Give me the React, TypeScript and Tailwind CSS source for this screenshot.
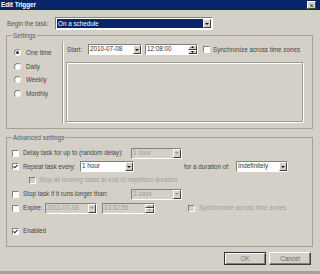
import React from "react";

const sunken = "border border-t-[#808080] border-l-[#808080] border-b-white border-r-white";
const raised = "border border-t-white border-l-white border-b-[#404040] border-r-[#404040]";

function Check({ checked, disabled }: { checked?: boolean; disabled?: boolean }) {
  return (
    <span
      className={`flex h-[7px] w-[7px] shrink-0 items-center justify-center ${sunken} ${disabled ? "bg-[#d4d0c8]" : "bg-white"}`}
    >
      {checked && (
        <svg width="5" height="5" viewBox="0 0 5 5">
          <path d="M0.4 2.3 L1.8 3.8 L4.6 0.8" stroke="#2a2a2a" strokeWidth="1.1" fill="none" />
        </svg>
      )}
    </span>
  );
}

function Radio({ checked }: { checked?: boolean }) {
  return (
    <span className="flex h-[7px] w-[7px] shrink-0 items-center justify-center rounded-full border border-t-[#808080] border-l-[#808080] border-b-[#f4f4f4] border-r-[#f4f4f4] bg-white">
      {checked && <span className="h-[3px] w-[3px] rounded-full bg-[#333]" />}
    </span>
  );
}

function Arrow({ disabled }: { disabled?: boolean }) {
  return (
    <span className={`flex h-full w-[8px] shrink-0 items-center justify-center bg-[#d4d0c8] ${raised}`}>
      <svg width="4" height="2" viewBox="0 0 4 2">
        <path d="M0 0 L4 0 L2 2 Z" fill={disabled ? "#9a978f" : "#111"} />
      </svg>
    </span>
  );
}

function Spin({ disabled }: { disabled?: boolean }) {
  const fill = disabled ? "#9a978f" : "#111";
  return (
    <span className="flex h-full w-[9px] shrink-0 flex-col">
      <span className={`flex flex-1 items-center justify-center bg-[#d4d0c8] ${raised}`}>
        <svg width="3" height="2" viewBox="0 0 3 2">
          <path d="M0 2 L3 2 L1.5 0 Z" fill={fill} />
        </svg>
      </span>
      <span className={`flex flex-1 items-center justify-center bg-[#d4d0c8] ${raised}`}>
        <svg width="3" height="2" viewBox="0 0 3 2">
          <path d="M0 0 L3 0 L1.5 2 Z" fill={fill} />
        </svg>
      </span>
    </span>
  );
}

function Combo({
  value,
  width,
  disabled,
  spin,
}: {
  value: string;
  width: string;
  disabled?: boolean;
  spin?: boolean;
}) {
  return (
    <div
      className={`flex h-[11px] shrink-0 items-center ${sunken} ${width} ${disabled ? "bg-[#d4d0c8] text-[#a19e97]" : "bg-white text-[#333]"}`}
    >
      <span className="flex-1 truncate pl-[1px] leading-none">{value}</span>
      {spin ? <Spin disabled={disabled} /> : <Arrow disabled={disabled} />}
    </div>
  );
}

function Group({ title, height, children }: { title: string; height: string; children: React.ReactNode }) {
  return (
    <fieldset className={`ml-[6px] w-[307px] border border-[#a3a09a] ${height}`}>
      <legend className="ml-[5px] px-[1px] leading-[7px] text-[#5a5a5a]">{title}</legend>
      {children}
    </fieldset>
  );
}

export default function App() {
  return (
    <div className="flex h-[274px] w-[320px] flex-col overflow-hidden border-b-[3px] border-b-[#a4a19a] bg-[#d4d0c8] font-['Liberation_Sans',Arial,sans-serif] text-[6.3px] text-[#444]">
      <div className="flex h-[10px] shrink-0 items-center justify-between bg-[#0a246a] pl-[1px] pr-[4px]">
        <span className="font-bold leading-none text-white">Edit Trigger</span>
        <span className={`flex h-[8px] w-[9px] items-center justify-center bg-[#d4d0c8] ${raised} text-[7px] leading-none text-[#111]`}>
          ×
        </span>
      </div>

      <div className="mt-[7px] flex h-[13px] items-center pl-[7px]">
        <span className="w-[48px] text-[#555]">Begin the task:</span>
        <div className={`flex h-[13px] w-[158px] items-center ${sunken} bg-white p-[1px]`}>
          <span className="flex h-full flex-1 items-center bg-[#0a246a] pl-[1px] text-white">On a schedule</span>
          <Arrow />
        </div>
      </div>

      <div className="mt-[2px]">
        <Group title="Settings" height="h-[97px]">
          <div className="flex h-full">
            <div className="flex w-[55px] flex-col pt-[7px] pl-[7px]">
              {[
                ["One time", true],
                ["Daily", false],
                ["Weekly", false],
                ["Monthly", false],
              ].map(([label, on]) => (
                <div key={label as string} className="flex h-[13.5px] items-center gap-[5px]">
                  <Radio checked={on as boolean} />
                  <span>{label as string}</span>
                </div>
              ))}
            </div>
            <div className="mt-[3px] mb-[4px] w-[2px] border-l border-l-[#9a978f] border-r border-r-white" />
            <div className="flex flex-col pl-[3px]">
              <div className="mt-[4.5px] flex h-[12px] items-center">
                <span className="w-[21px]">Start:</span>
                <Combo value="2010-07-08" width="w-[54px]" />
                <span className="w-[3px]" />
                <Combo value="12:08:00" width="w-[53px]" spin />
                <span className="w-[5px]" />
                <Check />
                <span className="ml-[3px]">Synchronize across time zones</span>
              </div>
              <div className="mt-[6px] -ml-[1px] h-[60px] w-[237px] border border-[#a09d96] shadow-[inset_1px_1px_0_#fff,1px_1px_0_#fff]" />
            </div>
          </div>
        </Group>
      </div>

      <div className="mt-[4.5px]">
        <Group title="Advanced settings" height="h-[113.5px]">
          <div className="flex flex-col pl-[5px]">
            <div className="mt-[6.5px] flex h-[12px] items-center">
              <Check />
              <span className="ml-[4px] w-[108px]">Delay task for up to (random delay):</span>
              <Combo value="1 hour" width="w-[51px]" disabled />
            </div>
            <div className="mt-[1px] flex h-[13px] items-center">
              <Check checked />
              <span className="ml-[4px] w-[57px]">Repeat task every:</span>
              <Combo value="1 hour" width="w-[54px]" />
              <span className="ml-[50px] w-[52px]">for a duration of:</span>
              <Combo value="Indefinitely" width="w-[52px]" />
            </div>
            <div className="mt-[1px] flex h-[12px] items-center pl-[17px]">
              <Check disabled />
              <span className="ml-[3px] text-[#a19e97]">Stop all running tasks at end of repetition duration</span>
            </div>
            <div className="mt-[2px] flex h-[12px] items-center">
              <Check />
              <span className="ml-[4px] w-[108px]">Stop task if it runs longer than:</span>
              <Combo value="3 days" width="w-[51px]" disabled />
            </div>
            <div className="mt-[2px] flex h-[12px] items-center">
              <Check />
              <span className="ml-[4px] w-[22px]">Expire:</span>
              <Combo value="2011-07-08" width="w-[52px]" disabled />
              <span className="w-[5px]" />
              <Combo value="13:32:59" width="w-[53px]" disabled spin />
              <span className="w-[33px]" />
              <Check disabled />
              <span className="ml-[4px] text-[#a19e97]">Synchronize across time zones</span>
            </div>
            <div className="mt-[11px] flex h-[12px] items-center">
              <Check checked />
              <span className="ml-[4px]">Enabled</span>
            </div>
          </div>
        </Group>
      </div>

      <div className="mt-[5px] flex h-[13px] justify-end gap-[3px] pr-[9px]">
        <button className="h-full w-[42px] border border-[#333] bg-[#d4d0c8] text-[#777] shadow-[inset_1px_1px_0_#fff,inset_-1px_-1px_0_#808080]">
          OK
        </button>
        <button className={`h-full w-[42px] bg-[#d4d0c8] text-[#666] ${raised} shadow-[inset_-1px_-1px_0_#808080]`}>
          Cancel
        </button>
      </div>
    </div>
  );
}
